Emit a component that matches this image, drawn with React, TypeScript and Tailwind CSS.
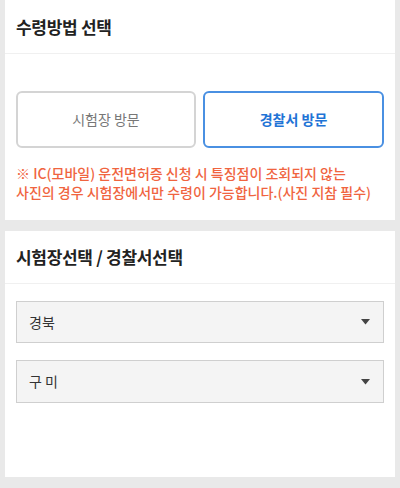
export default function App() {
  const font = { fontFamily: '"Noto Sans CJK KR", "Noto Sans", sans-serif' };
  return (
    <div className="w-[400px] h-[488px] bg-[#e9e9e9] px-[5px] flex flex-col gap-[11px]" style={font}>
      <div className="bg-white flex flex-col h-[220px]">
        <div className="h-[54px] flex items-center px-[11px] border-b border-[#f0f0f0]">
          <span className="text-[17px] font-bold text-[#222] tracking-[-0.3px]">수령방법 선택</span>
        </div>
        <div className="px-[11px] pt-[37px] flex gap-[7px]">
          <button className="w-[180px] h-[57px] rounded-[6px] border-2 border-[#d4d4d4] text-[14px] text-[#777] bg-white">시험장 방문</button>
          <button className="w-[181px] h-[57px] rounded-[6px] border-2 border-[#4a90e2] text-[14px] font-bold text-[#1f74d6] bg-white">경찰서 방문</button>
        </div>
        <div className="px-[11px] pt-[16px] text-[14px] leading-[19px] text-[#f0643f] font-medium">
          <p>※ IC(모바일) 운전면허증 신청 시 특징점이 조회되지 않는</p>
          <p>사진의 경우 시험장에서만 수령이 가능합니다.(사진 지참 필수)</p>
        </div>
      </div>
      <div className="bg-white flex flex-col h-[246px]">
        <div className="h-[53px] flex items-center px-[11px] border-b border-[#f0f0f0]">
          <span className="text-[17px] font-bold text-[#222] tracking-[-0.3px]">시험장선택 / 경찰서선택</span>
        </div>
        <div className="px-[11px] pt-[17px] flex flex-col gap-[17px]">
          <div className="h-[42px] bg-[#f4f4f4] border border-[#cfcfcf] flex items-center justify-between pl-[12px] pr-[13px]">
            <span className="text-[14px] text-[#333]">경북</span>
            <svg width="9" height="6" viewBox="0 0 9 6"><path d="M0 0h9L4.5 5.5z" fill="#444" /></svg>
          </div>
          <div className="h-[43px] bg-[#f4f4f4] border border-[#cfcfcf] flex items-center justify-between pl-[12px] pr-[13px]">
            <span className="text-[14px] text-[#333] tracking-[3px]">구미</span>
            <svg width="9" height="6" viewBox="0 0 9 6"><path d="M0 0h9L4.5 5.5z" fill="#444" /></svg>
          </div>
        </div>
      </div>
    </div>
  );
}
